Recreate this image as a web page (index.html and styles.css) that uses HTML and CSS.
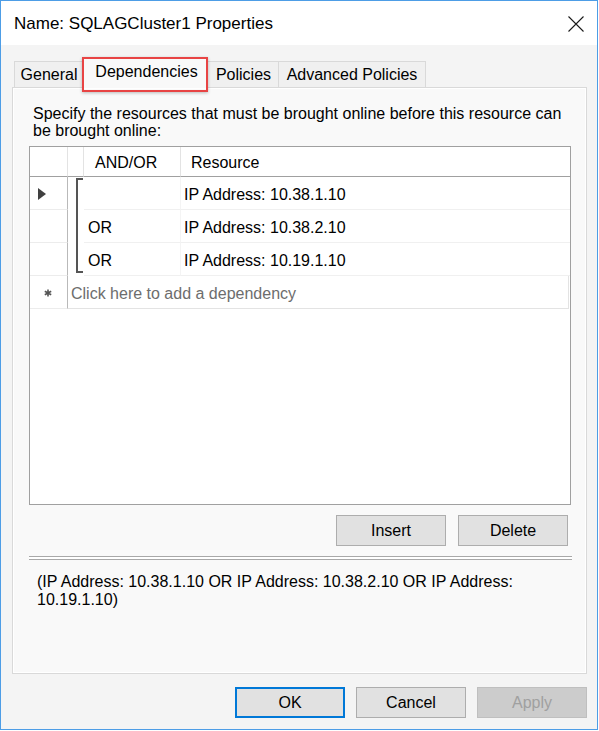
FILE: index.html
```html
<!DOCTYPE html>
<html>
<head>
<meta charset="utf-8">
<link rel="stylesheet" href="styles.css">
</head>
<body>
<div class="window">
  <div class="titlebar">
    <span class="title">Name: SQLAGCluster1 Properties</span>
    <svg class="close" width="16" height="16" viewBox="0 0 16 16"><path d="M0.5 0.5 L15.5 15.5 M15.5 0.5 L0.5 15.5" stroke="#1a1a1a" stroke-width="1.1" fill="none"/></svg>
  </div>
  <div class="content">
    <div class="tabstrip">
      <div class="tab tab-general">General</div>
      <div class="tab tab-dep selected">Dependencies<span class="highlight"></span></div>
      <div class="tab tab-pol">Policies</div>
      <div class="tab tab-adv">Advanced Policies</div>
    </div>
    <div class="panel">
      <div class="desc">Specify the resources that must be brought online before this resource can be brought online:</div>
      <div class="grid">
        <div class="gtable">
          <div class="hc hc-row"></div>
          <div class="hc hc-br"></div>
          <div class="hc hc-andor">AND/OR</div>
          <div class="hc hc-res">Resource</div>

          <div class="rh"><svg width="8" height="12" viewBox="0 0 8 12"><path d="M0 0 L8 6 L0 12 Z" fill="#404040"/></svg></div>
          <div class="bracket-cell"><div class="bracket"></div></div>
          <div class="dc dc-andor"></div>
          <div class="dc">IP Address: 10.38.1.10</div>

          <div class="rh"></div>
          <div class="dc dc-andor">OR</div>
          <div class="dc">IP Address: 10.38.2.10</div>

          <div class="rh"></div>
          <div class="dc dc-andor">OR</div>
          <div class="dc">IP Address: 10.19.1.10</div>

          <div class="rh rh-new"><svg width="8" height="8" viewBox="0 0 8 8"><path d="M4 0.5 V7.5 M0.8 2.2 L7.2 5.8 M7.2 2.2 L0.8 5.8" stroke="#555" stroke-width="1.6"/></svg></div>
          <div class="newrow">Click here to add a dependency</div>
        </div>
      </div>
      <div class="actions">
        <button class="btn">Insert</button>
        <button class="btn">Delete</button>
      </div>
      <div class="sep"></div>
      <div class="expr">(IP Address: 10.38.1.10 OR IP Address: 10.38.2.10 OR IP Address: 10.19.1.10)</div>
    </div>
    <div class="footer">
      <button class="btn btn-ok">OK</button>
      <button class="btn">Cancel</button>
      <button class="btn btn-disabled">Apply</button>
    </div>
  </div>
</div>
</body>
</html>
```
FILE: styles.css
```css
html, body {
  margin: 0;
  padding: 0;
  background: #ffffff;
}
body {
  font-family: "Liberation Sans", Arial, sans-serif;
  font-size: 16px;
  color: #000;
}
.window {
  box-sizing: border-box;
  width: 598px;
  height: 730px;
  border: 1px solid #4d9de6;
  background: #f4f4f4;
  display: flex;
  flex-direction: column;
}
.titlebar {
  height: 44px;
  background: #ffffff;
  display: flex;
  align-items: center;
  justify-content: space-between;
  padding: 1px 13px 0 13px;
  flex: none;
  box-sizing: border-box;
}
.title {
  font-size: 17px;
  color: #000;
}
.content {
  padding: 12px 10px 0 11px;
  flex: 1;
  display: flex;
  flex-direction: column;
}
.tabstrip {
  display: flex;
  align-items: flex-end;
  height: 30px;
  padding-left: 2px;
}
.tab {
  box-sizing: border-box;
  height: 26px;
  border: 1px solid #d9d9d9;
  border-bottom: none;
  background: #f0f0f0;
  display: flex;
  align-items: center;
  justify-content: center;
  font-size: 16px;
  padding-top: 1px;
}
.tab-general { width: 70px; }
.tab-pol { width: 72px; border-left: none; padding-left: 2px; }
.tab-adv { width: 147px; border-left: none; }
.tab.selected {
  height: 31px;
  margin: 0 -1px -1px -1px;
  width: 125px;
  background: #f9f9f9;
  position: relative;
  z-index: 1;
  padding-top: 0;
  padding-bottom: 3px;
  padding-left: 2px;
}
.highlight {
  position: absolute;
  left: -2px;
  top: -1px;
  right: -1px;
  bottom: -4px;
  border: 2px solid #e84444;
  box-shadow: 0 1px 3px rgba(0,0,0,0.25);
}
.panel {
  box-sizing: border-box;
  height: 587px;
  border: 1px solid #d9d9d9;
  box-shadow: inset 1px 1px 0 #ffffff, inset -1px -1px 0 #ffffff;
  background: #f9f9f9;
  padding: 17px 15px 0 16px;
  display: flex;
  flex-direction: column;
}
.desc {
  margin-left: 4px;
  line-height: 17px;
}
.grid {
  box-sizing: border-box;
  margin-top: 7px;
  height: 359px;
  border: 1px solid #a0a0a0;
  background: #ffffff;
}
.gtable {
  display: grid;
  grid-template-columns: 38px 16px 97px 1fr;
  grid-template-rows: 30px 33px 33px 33px 33px;
}
.hc {
  box-sizing: border-box;
  border-bottom: 1px solid #a0a0a0;
  border-right: 1px solid #e3e3e3;
  display: flex;
  align-items: center;
  padding-top: 2px;
}
.hc-andor { padding-left: 11px; }
.hc-res { padding-left: 10px; border-right: none; }
.rh {
  box-sizing: border-box;
  border-right: 1px solid #b9b9b9;
  border-bottom: 1px solid #ececec;
  display: flex;
  align-items: center;
  padding-left: 8px;
  padding-top: 2px;
}
.rh-new {
  padding-left: 14px;
}
.bracket-cell {
  grid-row: span 3;
  padding: 1px 0 3px 8px;
  display: flex;
}
.bracket {
  flex: none;
  width: 5px;
  border: 2px solid #555555;
  border-right: none;
}
.dc {
  box-sizing: border-box;
  border-bottom: 1px solid #f0f0f0;
  display: flex;
  align-items: center;
  padding-left: 3px;
  padding-top: 3px;
}
.dc-andor {
  padding-left: 4px;
  border-right: 1px solid #f4f4f4;
}
.newrow {
  grid-column: span 3;
  box-sizing: border-box;
  border-bottom: 1px solid #e3e3e3;
  border-right: 1px solid #e3e3e3;
  margin-right: 1px;
  display: flex;
  align-items: center;
  padding-left: 3px;
  padding-top: 3px;
  color: #6d6d6d;
}
.actions {
  display: flex;
  justify-content: flex-end;
  gap: 12px;
  margin-top: 10px;
  padding-right: 3px;
}
.btn {
  box-sizing: border-box;
  width: 110px;
  height: 31px;
  background: #e1e1e1;
  border: 1px solid #adadad;
  font-family: "Liberation Sans", Arial, sans-serif;
  font-size: 16px;
  color: #000;
  padding: 1px 0 0 0;
  margin: 0;
}
.sep {
  margin-top: 10px;
  height: 2px;
  border-top: 1px solid #a8a8a8;
  border-bottom: 1px solid #a8a8a8;
  background: #ffffff;
  margin-right: -1px;
}
.expr {
  margin-top: 13px;
  padding-left: 8px;
  padding-right: 40px;
  line-height: 18px;
}
.footer {
  display: flex;
  justify-content: flex-end;
  gap: 11px;
  margin-top: 13px;
  padding-right: 0;
}
.btn-ok {
  border: 2px solid #0078d7;
}
.btn-disabled {
  background: #cccccc;
  border-color: #bfbfbf;
  color: #a0a0a0;
}
```
